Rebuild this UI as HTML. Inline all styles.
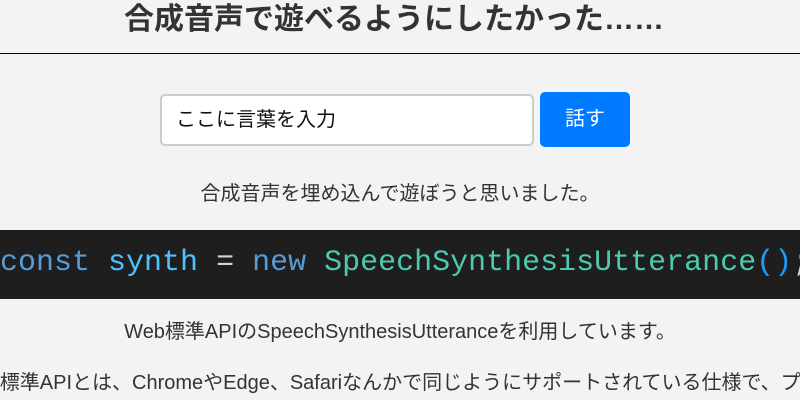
<!DOCTYPE html>
<html><head><meta charset="utf-8"><style>
body{margin:0;width:800px;height:400px;overflow:hidden;background:#f3f3f3;font-family:"Liberation Sans","Noto Sans CJK JP",sans-serif;color:#333;position:relative}
h1{position:absolute;top:0;left:-6px;width:800px;margin:0;text-align:center;font-size:30px;line-height:40px;font-weight:bold;color:#333}
.hr{position:absolute;top:53px;left:0;width:800px;height:1px;background:#000}
.inp{position:absolute;left:160px;top:94px;background:#fff;border:2px solid #ccc;border-radius:5px;box-sizing:border-box;width:374px;height:52px;font-size:20px;line-height:48px;padding-left:14px;color:#111}
.btn{position:absolute;left:540px;top:92px;width:90px;height:55px;background:#007bff;border-radius:5px;color:#fff;font-size:20px;text-align:center;line-height:55px}
.t{position:absolute;left:0;width:800px;text-align:center;font-size:20px;line-height:24px;color:#333}
.code{position:absolute;left:0;top:230px;width:800px;height:69px;background:#1e1e1e;overflow:hidden;font-family:"Liberation Mono","DejaVu Sans Mono",monospace;font-size:30px;white-space:pre}
.code div{position:absolute;left:0;top:16px;line-height:34px;color:#4fc1ff}
.clip{position:absolute;left:0;top:371px;width:800px;height:29px;overflow:hidden}
</style></head><body>
<h1>合成音声で遊べるようにしたかった……</h1>
<div class="hr"></div>
<div class="inp">ここに言葉を入力</div>
<div class="btn">話す</div>
<div class="t" style="top:182px">合成音声を埋め込んで遊ぼうと思いました。</div>
<div class="code"><div><span style="color:#569cd6">const</span> <span style="color:#4fc1ff">synth</span> <span style="color:#d4d4d4">=</span> <span style="color:#569cd6">new</span> <span style="color:#4ec9b0">SpeechSynthesisUtterance</span><span style="color:#179fff">()</span><span style="color:#d4d4d4">;</span></div></div>
<div class="t" style="top:320px">Web標準APIのSpeechSynthesisUtteranceを利用しています。</div>
<div class="clip"><div style="position:absolute;left:-41px;top:0;font-size:20px;line-height:24px;white-space:nowrap;color:#333">Web標準APIとは、ChromeやEdge、Safariなんかで同じようにサポートされている仕様で、プ</div></div>
</body></html>
